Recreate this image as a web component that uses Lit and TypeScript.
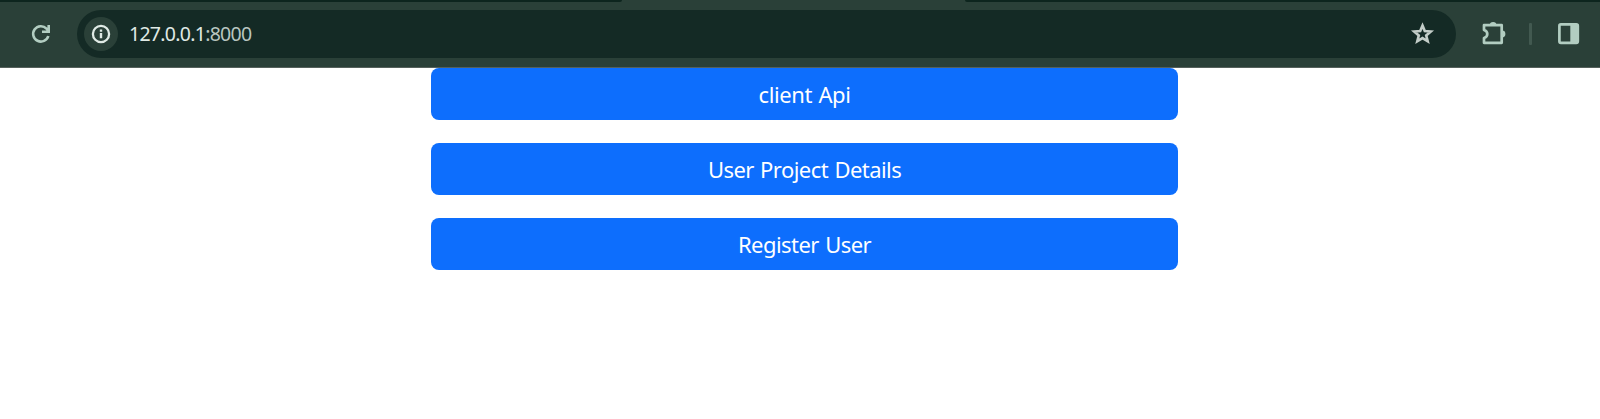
import { LitElement, html, css } from "lit";
import { customElement } from "lit/decorators.js";

@customElement("app-root")
export class AppRoot extends LitElement {
  static styles = css`
    :host { display: block; height: 419px; overflow: hidden; background: #fff; font-family: "Noto Sans", sans-serif; }
    .chrome { background: #2a4038; height: 68px; box-sizing: border-box; border-bottom: 1px solid #56615c; }
    .tabs { display: flex; justify-content: space-between; height: 2px; }
    .strip { background: #0d251e; }
    .left { width: 622px; border-bottom-right-radius: 2px; }
    .right { width: 635px; border-bottom-left-radius: 2px; }
    .bar { display: flex; align-items: center; height: 48px; padding: 8px 16px 0 26px; }
    svg { display: block; flex: none; }
    .reload { margin-right: 21px; }
    .omnibox { display: flex; align-items: center; box-sizing: border-box; width: 1379px; height: 48px; padding: 0 17px 0 7px; border-radius: 24px; background: #142a25; }
    .chip { display: grid; place-items: center; width: 34px; height: 34px; border-radius: 50%; background: #2a4038; }
    .url { flex: 1; margin-left: 11px; font-size: 19.5px; line-height: 28px; letter-spacing: -0.72px; color: #e0eae5; }
    .port { color: #b9c6c0; }
    .puzzle { margin-left: 20px; }
    .divider { width: 3px; height: 22px; margin: 0 22px 0 17px; border-radius: 1px; background: #425950; }
    main { display: flex; flex-direction: column; gap: 23px; width: 747px; margin-left: 431px; }
    button { height: 52px; padding: 0; border: 0; border-radius: 8px; background: #0d6efd; color: #fff; font: 22px/52px "Noto Sans", sans-serif; letter-spacing: -0.56px; word-spacing: 1.2px; }
    button:first-child { letter-spacing: -0.4px; }
  `;

  render() {
    return html`
      <header class="chrome">
        <div class="tabs"><div class="strip left"></div><div class="strip right"></div></div>
        <div class="bar">
          <svg class="reload" width="30" height="30" viewBox="0 0 30 30" fill="none" stroke="#b2cdc1" stroke-width="2.6">
            <path d="M22.3 17A7.7 7.7 0 1 1 20.5 9.6L22.5 11.8M22.7 6V12.7H16" />
          </svg>
          <div class="omnibox">
            <div class="chip">
              <svg width="22" height="22" viewBox="0 0 22 22">
                <circle cx="11" cy="11" r="8.1" fill="none" stroke="#e0eae5" stroke-width="2.3" />
                <path d="M9.8 10h2.4v5.3h-2.4zM9.8 6.4h2.4v2.3h-2.4z" fill="#e0eae5" />
              </svg>
            </div>
            <div class="url">127.0.0.1<span class="port">:8000</span></div>
            <svg width="32" height="32" viewBox="0 0 32 32" fill="none" stroke="#c3cdc8" stroke-width="2.6">
              <path d="M15.5 7.5L17.8 13L23.8 13.5L19.2 17.4L20.7 23.3L15.5 20.1L10.3 23.3L11.8 17.4L7.2 13.5L13.2 13Z" />
            </svg>
          </div>
          <svg class="puzzle" width="36" height="36" viewBox="0 0 36 36">
            <path d="M8 9.2H25.7V26.8H8V22Q11.3 21 11.3 18Q11.3 15 8 14Z" fill="none" stroke="#b2cdc1" stroke-width="2.7" stroke-linejoin="round" />
            <path d="M13.8 9.2a3.3 3.3 0 0 1 6.6 0zM26 14.6a3.4 3.4 0 0 1 0 6.8z" fill="#b2cdc1" />
          </svg>
          <div class="divider"></div>
          <svg width="30" height="30" viewBox="0 0 30 30">
            <rect x="5.4" y="5.4" width="18.4" height="18.4" rx="1.5" fill="none" stroke="#b2cdc1" stroke-width="2.7" />
            <path d="M16.3 5h7.7v19h-7.7z" fill="#b2cdc1" />
          </svg>
        </div>
      </header>
      <main>
        <button>client Api</button>
        <button>User Project Details</button>
        <button>Register User</button>
      </main>
    `;
  }
}
